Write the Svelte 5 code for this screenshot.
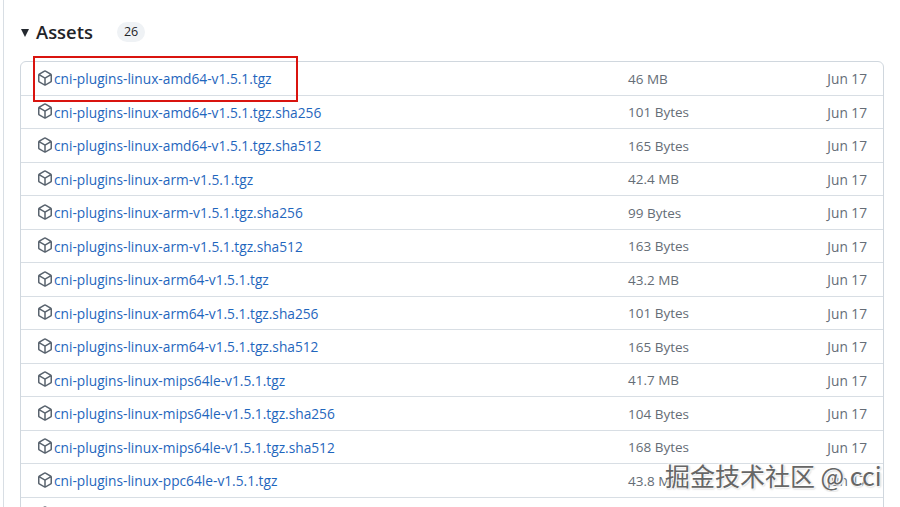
<script lang="ts">
  const assets = [
    ['cni-plugins-linux-amd64-v1.5.1.tgz', '46 MB'],
    ['cni-plugins-linux-amd64-v1.5.1.tgz.sha256', '101 Bytes'],
    ['cni-plugins-linux-amd64-v1.5.1.tgz.sha512', '165 Bytes'],
    ['cni-plugins-linux-arm-v1.5.1.tgz', '42.4 MB'],
    ['cni-plugins-linux-arm-v1.5.1.tgz.sha256', '99 Bytes'],
    ['cni-plugins-linux-arm-v1.5.1.tgz.sha512', '163 Bytes'],
    ['cni-plugins-linux-arm64-v1.5.1.tgz', '43.2 MB'],
    ['cni-plugins-linux-arm64-v1.5.1.tgz.sha256', '101 Bytes'],
    ['cni-plugins-linux-arm64-v1.5.1.tgz.sha512', '165 Bytes'],
    ['cni-plugins-linux-mips64le-v1.5.1.tgz', '41.7 MB'],
    ['cni-plugins-linux-mips64le-v1.5.1.tgz.sha256', '104 Bytes'],
    ['cni-plugins-linux-mips64le-v1.5.1.tgz.sha512', '168 Bytes'],
    ['cni-plugins-linux-ppc64le-v1.5.1.tgz', '43.8 MB'],
    ['', '']
  ]
</script>

<div class="page">
  <div class="frame">
    <div class="heading">
      <span class="caret"></span>
      <h3>Assets</h3>
      <span class="counter">26</span>
    </div>

    <ul class="list">
      {#each assets as [name, size]}
        <li class="row">
          <span class="file">
            <svg class="icon" viewBox="0 0 16 16" width="16" height="16" aria-hidden="true">
              <path d="m8.878.392 5.25 3.045c.54.314.872.89.872 1.514v6.098a1.75 1.75 0 0 1-.872 1.514l-5.25 3.045a1.75 1.75 0 0 1-1.756 0l-5.25-3.045A1.75 1.75 0 0 1 1 11.049V4.951c0-.624.332-1.201.872-1.514L7.122.392a1.75 1.75 0 0 1 1.756 0ZM7.875 1.69l-4.63 2.685L8 7.133l4.755-2.758-4.63-2.685a.248.248 0 0 0-.25 0ZM2.5 5.677v5.372c0 .09.047.171.125.216l4.625 2.683V8.432Zm6.25 8.271 4.625-2.683a.25.25 0 0 0 .125-.216V5.677L8.75 8.432Z" />
            </svg>
            <a href="#top">{name}</a>
          </span>
          <span class="size">{size}</span>
          <span class="date">{name ? 'Jun 17' : ''}</span>
        </li>
      {/each}
    </ul>
  </div>

  <div class="highlight"></div>
  <div class="watermark">掘金技术社区 @ cci</div>
</div>

<style>
  :global(body) {
    margin: 0;
    background: #fff;
  }

  .page {
    position: relative;
    width: 900px;
    height: 507px;
    overflow: hidden;
    font-family: 'Open Sans', 'Noto Sans', sans-serif;
    color: #1f2328;
  }

  .frame {
    box-sizing: border-box;
    width: 885px;
    height: 507px;
    margin-left: 3px;
    padding: 16px 0 0 16px;
    border-left: 1px solid #d8dee4;
  }

  .heading {
    display: flex;
    align-items: center;
    height: 32px;
  }

  .caret {
    width: 0;
    height: 0;
    margin: 2px 7px 0 1px;
    border-top: 8px solid #24292f;
    border-left: 4.5px solid transparent;
    border-right: 4.5px solid transparent;
  }

  h3 {
    margin: 0 24px 0 0;
    font-size: 18.4px;
    font-weight: 600;
    line-height: 32px;
  }

  .counter {
    padding: 0 7px;
    background: #eff2f5;
    border-radius: 10px;
    font-size: 12.5px;
    line-height: 20px;
  }

  .list {
    box-sizing: border-box;
    width: 864px;
    margin: 13.3px 0 0;
    padding: 0;
    list-style: none;
    border: 1px solid #d0d7de;
    border-radius: 6px;
  }

  .row {
    display: flex;
    align-items: center;
    box-sizing: border-box;
    height: 33.5px;
    padding: 0 16px;
    border-bottom: 1px solid #d8dee4;
    font-size: 13.5px;
  }

  .row:last-child {
    border-bottom: 0;
  }

  .file {
    display: flex;
    align-items: center;
    width: 591px;
  }

  .icon {
    flex: none;
    margin-top: -2px;
    fill: #59636e;
  }

  a {
    margin-left: 1px;
    color: #1f66bd;
    text-decoration: none;
    font-size: 13.72px;
    font-weight: 500;
  }

  .size {
    flex: 1;
    color: #656d76;
  }

  .date {
    font-size: 13.7px;
    color: #656d76;
  }

  .highlight {
    position: absolute;
    left: 33px;
    top: 56px;
    width: 261px;
    height: 42px;
    border: 2px solid #d9140f;
  }

  .watermark {
    position: absolute;
    left: 665px;
    top: 458px;
    width: 218px;
    overflow: hidden;
    white-space: nowrap;
    font-family: 'Noto Sans CJK SC', sans-serif;
    font-size: 25px;
    line-height: 34px;
    color: #666;
    text-shadow: 1px 1px 1px #fff, -1px -1px 1px #fff, 1px 1px 2px #aaa;
  }
</style>
